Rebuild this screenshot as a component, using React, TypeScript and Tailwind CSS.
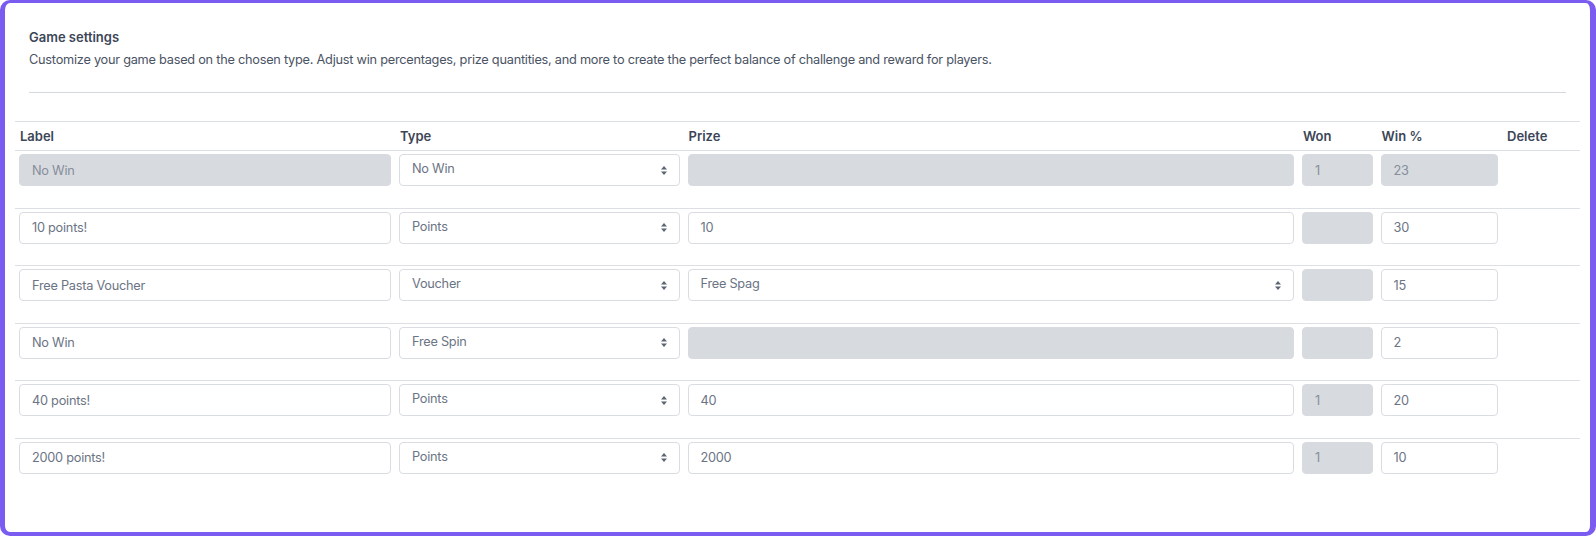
import React from "react";

type Cell =
  | { kind: "input"; value: string; disabled?: boolean }
  | { kind: "select"; value: string };

type Row = {
  label: Cell;
  type: Cell;
  prize: Cell;
  won: Cell;
  pct: Cell;
};

const rows: Row[] = [
  {
    label: { kind: "input", value: "No Win", disabled: true },
    type: { kind: "select", value: "No Win" },
    prize: { kind: "input", value: "", disabled: true },
    won: { kind: "input", value: "1", disabled: true },
    pct: { kind: "input", value: "23", disabled: true },
  },
  {
    label: { kind: "input", value: "10 points!" },
    type: { kind: "select", value: "Points" },
    prize: { kind: "input", value: "10" },
    won: { kind: "input", value: "", disabled: true },
    pct: { kind: "input", value: "30" },
  },
  {
    label: { kind: "input", value: "Free Pasta Voucher" },
    type: { kind: "select", value: "Voucher" },
    prize: { kind: "select", value: "Free Spag" },
    won: { kind: "input", value: "", disabled: true },
    pct: { kind: "input", value: "15" },
  },
  {
    label: { kind: "input", value: "No Win" },
    type: { kind: "select", value: "Free Spin" },
    prize: { kind: "input", value: "", disabled: true },
    won: { kind: "input", value: "", disabled: true },
    pct: { kind: "input", value: "2" },
  },
  {
    label: { kind: "input", value: "40 points!" },
    type: { kind: "select", value: "Points" },
    prize: { kind: "input", value: "40" },
    won: { kind: "input", value: "1", disabled: true },
    pct: { kind: "input", value: "20" },
  },
  {
    label: { kind: "input", value: "2000 points!" },
    type: { kind: "select", value: "Points" },
    prize: { kind: "input", value: "2000" },
    won: { kind: "input", value: "1", disabled: true },
    pct: { kind: "input", value: "10" },
  },
];

function SortArrows() {
  return (
    <svg width="6" height="9" viewBox="0 0 6 9" className="shrink-0">
      <path d="M3 0 L6 3.5 H0 Z" fill="#5b6472" />
      <path d="M3 9 L0 5.5 H6 Z" fill="#5b6472" />
    </svg>
  );
}

function Field({ cell }: { cell: Cell }) {
  if (cell.kind === "select") {
    return (
      <div className="flex h-8 items-center justify-between rounded border border-[#d9dce1] bg-white pl-3 pr-3 text-[12.75px] leading-5 tracking-[-0.25px] text-[#6b7484]">
        <span className="-mt-[2px]">{cell.value}</span>
        <SortArrows />
      </div>
    );
  }
  if (cell.disabled) {
    return (
      <div className="flex h-8 items-center rounded border border-[#d7dade] bg-[#d7dade] px-3 pt-px text-[12.75px] leading-5 tracking-[-0.25px] text-[#868e9c]">
        {cell.value}
      </div>
    );
  }
  return (
    <div className="flex h-8 items-center rounded border border-[#d9dce1] bg-white px-3 pt-px text-[12.75px] leading-5 tracking-[-0.25px] text-[#6b7484]">
      {cell.value}
    </div>
  );
}

const widths = ["w-[380px]", "w-[288.5px]", "w-[614.5px]", "w-[78.5px]", "w-[125.5px]", "w-[78px]"];

export default function App() {
  const headers = ["Label", "Type", "Prize", "Won", "Win %", "Delete"];
  return (
    <div
      className="h-[536px] w-full bg-white"
      style={{ fontFamily: "Inter, 'Noto Sans', sans-serif" }}
    >
      <div className="flex h-full flex-col rounded-[10px] border-b-[4px] border-l-[5px] border-r-[6px] border-t-[3px] border-[#7a5cf0] bg-white">
        <div className="px-6 pt-6">
          <div className="text-[13px] font-semibold leading-5 text-[#3c4657]">Game settings</div>
          <div className="mt-[3px] text-[12.75px] leading-5 tracking-[-0.25px] text-[#4a5364]">
            Customize your game based on the chosen type. Adjust win percentages, prize quantities, and more to create the perfect balance of challenge and reward for players.
          </div>
          <div className="mt-[22px] h-px bg-[#d5d8dd]" />
        </div>
        <div className="mx-[10px] mt-7">
          <div className="flex h-[30px] items-center border-b border-t border-[#dcdfe3]">
            {headers.map((h, i) => (
              <div
                key={h}
                className={`${widths[i]} shrink-0 px-[5px] text-[13px] font-semibold leading-5 text-[#3c4657]`}
              >
                {h}
              </div>
            ))}
          </div>
          {rows.map((r, idx) => (
            <div
              key={idx}
              className={`flex h-[57.6px] items-start pt-[3px] ${
                idx < rows.length - 1 ? "border-b border-[#dcdfe3]" : ""
              }`}
            >
              <div className={`${widths[0]} shrink-0 px-1`}>
                <Field cell={r.label} />
              </div>
              <div className={`${widths[1]} shrink-0 px-1`}>
                <Field cell={r.type} />
              </div>
              <div className={`${widths[2]} shrink-0 px-1`}>
                <Field cell={r.prize} />
              </div>
              <div className={`${widths[3]} shrink-0 px-1`}>
                <Field cell={r.won} />
              </div>
              <div className={`${widths[4]} shrink-0 px-1`}>
                <Field cell={r.pct} />
              </div>
              <div className={`${widths[5]} shrink-0 px-1`} />
            </div>
          ))}
        </div>
      </div>
    </div>
  );
}
